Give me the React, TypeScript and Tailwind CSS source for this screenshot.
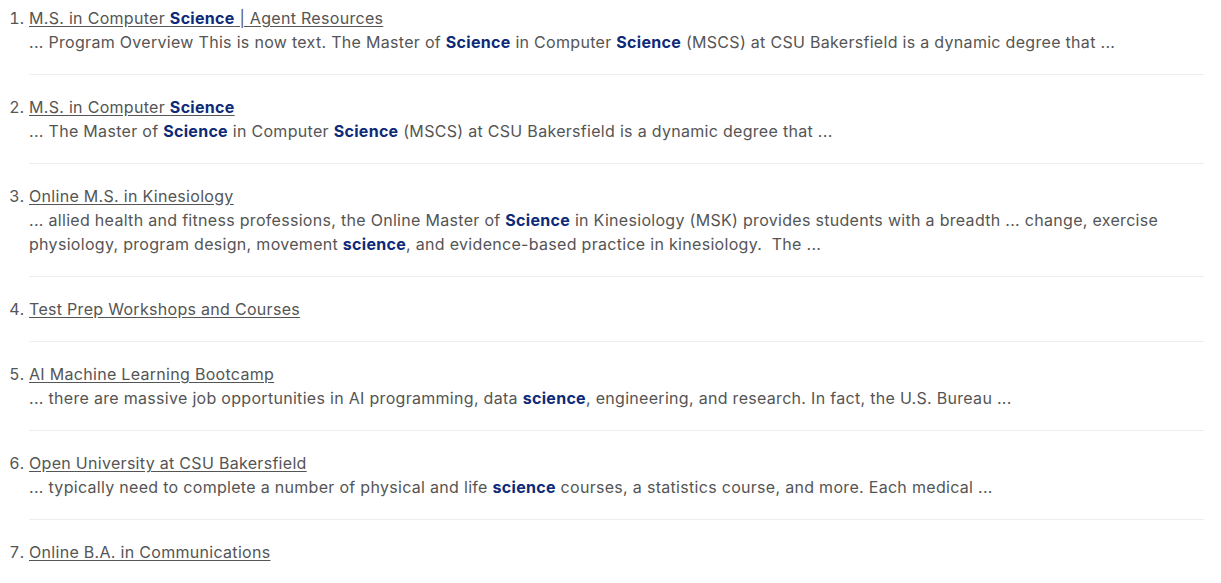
import React from 'react';

type Part = string | { b: string };

const results: { title: Part[]; snippet?: Part[] }[] = [
  {
    title: ['M.S. in Computer ', { b: 'Science' }, ' | Agent Resources'],
    snippet: [
      '... Program Overview This is now text. The Master of ',
      { b: 'Science' },
      ' in Computer ',
      { b: 'Science' },
      ' (MSCS) at CSU Bakersfield is a dynamic degree that ...',
    ],
  },
  {
    title: ['M.S. in Computer ', { b: 'Science' }],
    snippet: [
      '... The Master of ',
      { b: 'Science' },
      ' in Computer ',
      { b: 'Science' },
      ' (MSCS) at CSU Bakersfield is a dynamic degree that ...',
    ],
  },
  {
    title: ['Online M.S. in Kinesiology'],
    snippet: [
      '... allied health and fitness professions, the Online Master of ',
      { b: 'Science' },
      ' in Kinesiology (MSK) provides students with a breadth ... change, exercise physiology, program design, movement ',
      { b: 'science' },
      ', and evidence-based practice in kinesiology.\u00a0 The ...',
    ],
  },
  { title: ['Test Prep Workshops and Courses'] },
  {
    title: ['AI Machine Learning Bootcamp'],
    snippet: [
      '... there are massive job opportunities in AI programming, data ',
      { b: 'science' },
      ', engineering, and research. In fact, the U.S. Bureau ...',
    ],
  },
  {
    title: ['Open University at CSU Bakersfield'],
    snippet: [
      '... typically need to complete a number of physical and life ',
      { b: 'science' },
      ' courses, a statistics course, and more. Each medical ...',
    ],
  },
  { title: ['Online B.A. in Communications'] },
];

function Text({ parts }: { parts: Part[] }) {
  return (
    <>
      {parts.map((p, i) =>
        typeof p === 'string' ? (
          <React.Fragment key={i}>{p}</React.Fragment>
        ) : (
          <strong key={i} className="font-bold text-[#0d2a78]">
            {p.b}
          </strong>
        )
      )}
    </>
  );
}

export default function App() {
  return (
    <div className="bg-white min-h-screen font-['Inter',sans-serif] text-[16px] leading-6 tracking-[0.3px] text-[#555555]">
      <ol className="list-decimal pl-[29px] pr-[17px] pt-[6px]">
        {results.map((r, i) => (
          <li key={i} className="pb-5 mb-5 border-b border-[#eeeeee]">
            <a href="#" className="underline decoration-[#555555] underline-offset-2 text-[#555555]">
              <Text parts={r.title} />
            </a>
            {r.snippet && (
              <p>
                <Text parts={r.snippet} />
              </p>
            )}
          </li>
        ))}
      </ol>
    </div>
  );
}
